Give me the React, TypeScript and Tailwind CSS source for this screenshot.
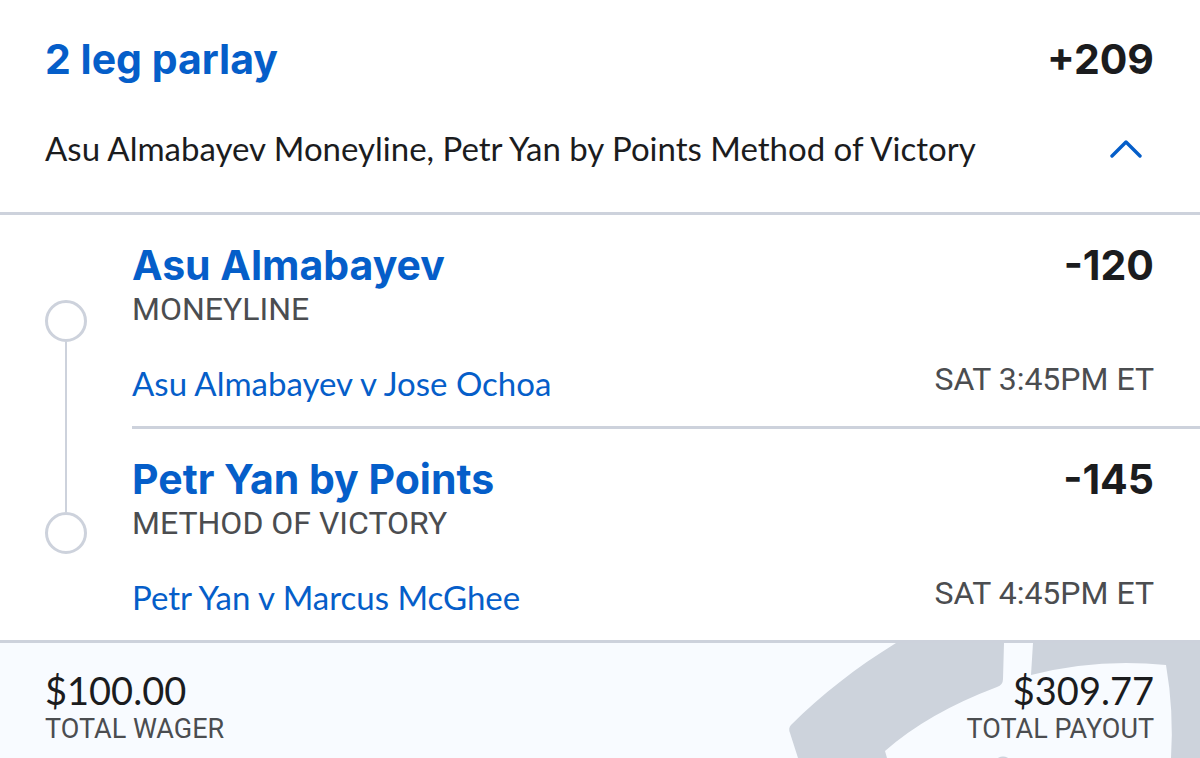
import { useState } from 'react'

const LEGS = [
  {
    pick: 'Asu Almabayev',
    market: 'MONEYLINE',
    odds: '-120',
    game: 'Asu Almabayev v Jose Ochoa',
    time: 'SAT 3:45PM ET',
  },
  {
    pick: 'Petr Yan by Points',
    market: 'METHOD OF VICTORY',
    odds: '-145',
    game: 'Petr Yan v Marcus McGhee',
    time: 'SAT 4:45PM ET',
  },
]

type Leg = (typeof LEGS)[number]

function ShieldMark() {
  return (
    <svg
      className="pointer-events-none absolute right-0 top-0"
      width="412"
      height="115"
      viewBox="0 0 412 115"
      fill="#cdd3dc"
      aria-hidden="true"
    >
      <path d="M108 0C69 24 34 51 3 82Q0 85 2 90L10 115H99L97 108Q140 70 209 44Q215 42 215 36L216 0Z" />
      <path d="M245 0L243 32Q309 15 378 22Q386 68 383 115H412V0Z" />
      <ellipse cx="215" cy="117" rx="6" ry="3.5" />
    </svg>
  )
}

function LegRow({ leg }: { leg: Leg }) {
  return (
    <li className="border-b-3 border-[#cdd2dc] pt-[26px] pr-[46px] pb-[19px] last:border-b-0">
      <div className="flex items-start justify-between font-[Inter,sans-serif] text-[41px] leading-[48px] font-bold">
        <h2 className="text-[#055ec9]">{leg.pick}</h2>
        <span>{leg.odds}</span>
      </div>
      <p className="font-[Roboto,sans-serif] text-[32px] leading-[40px] text-[#4b4d50]">{leg.market}</p>
      <div className="mt-[30px] flex items-start justify-between">
        <a href="#game" className="text-[33px] leading-[48px] text-[#055ec9]">{leg.game}</a>
        <time className="font-[Roboto,sans-serif] text-[32px] leading-[40px] text-[#4b4d50]">{leg.time}</time>
      </div>
    </li>
  )
}

export default function App() {
  const [open, setOpen] = useState(true)

  return (
    <main className="bg-white font-[Lato,sans-serif] text-[#1b1c1e]">
      <header className="border-b-3 border-[#cdd2dc] pt-[35px] pr-[46px] pb-[44px] pl-[45px]">
        <div className="flex items-center justify-between font-[Inter,sans-serif] text-[41px] leading-[48px] font-bold">
          <h1 className="text-[#055ec9]">2 leg parlay</h1>
          <span>+209</span>
        </div>
        <div className="mt-[45px] flex items-center justify-between">
          <p className="text-[33px] leading-[40px]">Asu Almabayev Moneyline, Petr Yan by Points Method of Victory</p>
          <button
            type="button"
            aria-label="Toggle legs"
            aria-expanded={open}
            onClick={() => setOpen(!open)}
            className="mr-3 shrink-0 cursor-pointer"
          >
            <svg
              width="32"
              height="20"
              viewBox="0 0 32 20"
              fill="none"
              stroke="#055ec9"
              strokeWidth="3.4"
              strokeLinecap="round"
              strokeLinejoin="round"
              className={open ? '' : 'rotate-180'}
            >
              <path d="M2 18L16 4L30 18" />
            </svg>
          </button>
        </div>
      </header>

      {open && (
        <section className="flex">
          {/* Timeline */}
          <div className="flex w-[132px] shrink-0 flex-col items-start pt-[85px] pb-[86px] pl-[45px]" aria-hidden="true">
            <div className="size-[42px] rounded-full border-3 border-[#cdd2dc]" />
            <div className="flex w-[42px] flex-1 justify-center">
              <div className="w-0.5 bg-[#cdd2dc]" />
            </div>
            <div className="size-[42px] rounded-full border-3 border-[#cdd2dc]" />
          </div>
          <ul className="flex-1">
            {LEGS.map((leg) => (
              <LegRow key={leg.pick} leg={leg} />
            ))}
          </ul>
        </section>
      )}

      <footer className="relative border-t-3 border-[#cdd2dc] bg-[#f8fbff]">
        <ShieldMark />
        <dl className="relative flex justify-between pt-6 pr-[46px] pb-[13px] pl-[45px]">
          <div className="flex flex-col-reverse">
            <dt className="font-[Roboto,sans-serif] text-[27px] leading-[32px] text-[#4b4d50]">TOTAL WAGER</dt>
            <dd className="text-[38px] leading-[46px]">$100.00</dd>
          </div>
          <div className="flex flex-col-reverse text-right">
            <dt className="font-[Roboto,sans-serif] text-[27px] leading-[32px] text-[#4b4d50]">TOTAL PAYOUT</dt>
            <dd className="text-[38px] leading-[46px]">$309.77</dd>
          </div>
        </dl>
      </footer>
    </main>
  )
}
